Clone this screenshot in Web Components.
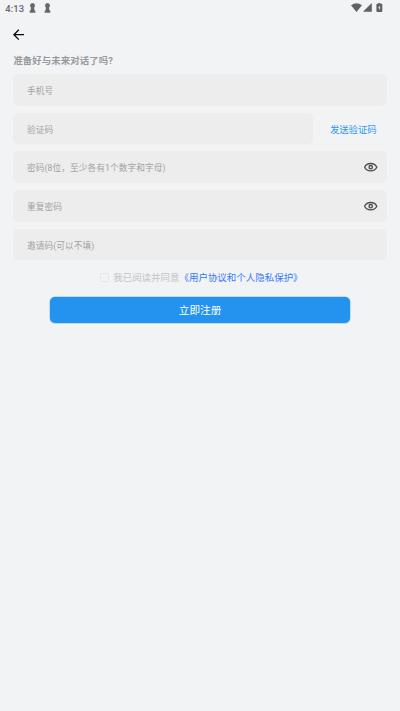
<!DOCTYPE html>
<html lang="zh-CN">
<head>
<meta charset="utf-8">
<title>注册</title>
<style>
html,body{margin:0;height:100%;background:#f1f3f5}
body{font-family:Roboto,"Noto Sans CJK SC",sans-serif;overflow:hidden}
</style>
</head>
<body>
<register-page></register-page>
<script>
const define = (name, html) => customElements.define(name, class extends HTMLElement {
  constructor() {
    super();
    const t = document.createElement('template');
    t.innerHTML = html;
    this.attachShadow({mode: 'open'}).append(t.content.cloneNode(true));
  }
});

const pawn = `<svg width="7" height="10" viewBox="0 0 7 10"><path fill="#66686a" d="M3.500 0a2.600 2.600 0 0 1 2.500 2.400c0 .7-.3 1.200-.7 1.600v.8h-.2L5.300 7l1 .8v2H.7v-2l1-.8.2-2.200h-.2V4c-.4-.4-.7-.9-.7-1.600A2.600 2.600 0 0 1 3.500 0z"/></svg>`;

define('status-bar', `
<style>
:host{display:flex;align-items:center;height:16px;box-sizing:border-box;padding:0 17.500px 1px 5.300px;color:#66686a;font-size:9.400px;font-weight:500;letter-spacing:.1px}
svg{display:block}
span{padding-top:1px}
.notes{display:flex;gap:8px;margin-left:5px;padding-top:1px}
.system{display:flex;align-items:center;margin-left:auto}
.system svg+svg{margin-left:1px}
.system .battery{margin-left:4px}
</style>
<span>4:13</span>
<div class="notes">${pawn}${pawn}</div>
<div class="system">
<svg width="11" height="9" viewBox="0 0 11 9"><path fill="#5f6163" d="M0 2.200Q5.500-1.800 11 2.200L5.500 9z"/></svg>
<svg width="9" height="9" viewBox="0 0 9 9"><path fill="#5f6163" d="M8.800 0v8.700H0z"/></svg>
<svg class="battery" width="7" height="9" viewBox="0 0 7 9"><path fill="#5f6163" fill-rule="evenodd" d="M2.300 0h2v.8h1.300q.7 0 .7.700v6.800q0 .7-.7.700H1.100q-.7 0-.7-.7V1.500q0-.7.7-.7h1.200zM3.600 2.200 2.300 5h.9v2.300l1.300-2.800h-.9z"/></svg>
</div>`);

define('back-button', `
<style>:host{display:block;width:12px;height:12px}svg{display:block}</style>
<svg width="12" height="12" viewBox="0 0 12 12"><path fill="none" stroke="#080808" stroke-width="1.300" d="M11 5.700H1M5.800.8.9 5.700l4.900 4.900"/></svg>`);

define('eye-icon', `
<style>:host{display:block;width:14px;height:10px}svg{display:block}</style>
<svg width="14" height="10" viewBox="0 0 14 10"><path fill="none" stroke="#4c4c52" stroke-width="1.350" d="M.6 5.200C3.100.3 10.300.3 12.800 5.200 10.300 10.100 3.100 10.100.6 5.200z"/><circle cx="6.700" cy="5.200" r="1.650" fill="none" stroke="#4c4c52" stroke-width="1.400"/></svg>`);

define('text-field', `
<style>
:host{display:flex;align-items:center;justify-content:space-between;box-sizing:border-box;height:31.900px;padding:3.500px 9px 0 13.500px;border-radius:5px;background:#ededed;color:#a2a2a2;font-size:8.670px;letter-spacing:.1px;line-height:13px;white-space:nowrap}
::slotted(eye-icon){margin-top:-3.200px}
</style>
<span><slot></slot></span><slot name="action"></slot>`);

define('code-row', `
<style>
:host{display:flex;align-items:center}
text-field{flex:0 0 300px}
.send{flex:1;text-align:center;padding:2.300px 0 0 6.500px;color:#2b98f0;font-size:9.330px;line-height:14px;white-space:nowrap}
</style>
<text-field><slot></slot></text-field><span class="send">发送验证码</span>`);

define('agreement-row', `
<style>
:host{display:flex;align-items:center;justify-content:flex-start;height:14px;padding-left:87px;color:#c2c4c7;font-size:9.480px;line-height:14px;white-space:nowrap}
i{box-sizing:border-box;width:9px;height:9px;border:1px solid #e4e5e7;border-radius:1.500px;margin-right:3.800px}
b{font-weight:400;color:#3478fa}
</style>
<i></i><span>我已阅读并同意<b>《用户协议和个人隐私保护》</b></span>`);

define('submit-button', `
<style>
:host{display:flex;align-items:center;justify-content:center;box-sizing:border-box;height:26.700px;padding-top:1px;border-radius:5px;background:#2492ef;box-shadow:0 0 0 .500px #8fc4f2;color:#fff;font-size:10.670px;line-height:16px}
</style>
<slot></slot>`);

define('register-page', `
<style>
:host{display:block;height:711px;background:#f1f3f5}
main{padding:13px 13.400px 0 13.400px}
h1{margin:13px 0 5.950px;color:#999b9b;font-size:9.400px;line-height:14px;font-weight:700;letter-spacing:.1px}
.fields{display:grid;gap:6.770px}
agreement-row{margin-top:10.250px}
submit-button{margin:12px 36.600px 0 36.700px}
</style>
<status-bar></status-bar>
<main>
<back-button></back-button>
<h1>准备好与未来对话了吗?</h1>
<div class="fields">
<text-field>手机号</text-field>
<code-row>验证码</code-row>
<text-field>密码(8位，至少各有1个数字和字母)<eye-icon slot="action"></eye-icon></text-field>
<text-field>重复密码<eye-icon slot="action"></eye-icon></text-field>
<text-field>邀请码(可以不填)</text-field>
</div>
<agreement-row></agreement-row>
<submit-button>立即注册</submit-button>
</main>`);
</script>
</body>
</html>
